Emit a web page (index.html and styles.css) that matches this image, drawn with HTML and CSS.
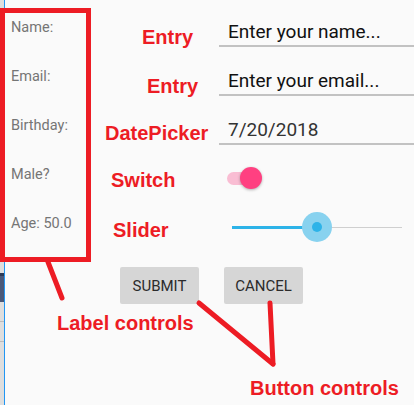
FILE: index.html
```html
<!DOCTYPE html>
<html lang="en">
<head>
  <meta charset="UTF-8">
  <title>Controls</title>
  <meta name="viewport" content="width=device-width, initial-scale=1.0">
  <link rel="stylesheet" href="styles.css">
</head>
<body>

<div class="page">
  <div class="edge">
    <div class="edge-tab"></div>
    <div class="edge-rule"></div>
    <div class="edge-rule"></div>
  </div>

  <main class="screen">
    <div class="form">
      <span class="field-label">Name:</span>
      <div class="entry">Enter your name...</div>

      <span class="field-label">Email:</span>
      <div class="entry">Enter your email...</div>

      <span class="field-label">Birthday:</span>
      <div class="entry entry-date">7/20/2018</div>

      <span class="field-label">Male?</span>
      <div class="control">
        <div class="switch">
          <span class="switch-track"></span>
          <span class="switch-thumb"></span>
        </div>
      </div>

      <span class="field-label">Age: 50.0</span>
      <div class="control">
        <div class="slider">
          <span class="slider-fill"></span>
          <span class="slider-thumb"><span class="slider-dot"></span></span>
          <span class="slider-rest"></span>
        </div>
      </div>
    </div>

    <div class="buttons">
      <button class="btn">Submit</button>
      <button class="btn">Cancel</button>
    </div>
  </main>

  <!-- annotations over the screenshot -->
  <div class="callout-box"></div>
  <svg class="callout-lines" width="414" height="405" viewBox="0 0 414 405">
    <line x1="48" y1="262" x2="62" y2="298" />
    <line x1="199" y1="303" x2="273" y2="364" />
    <line x1="270" y1="303" x2="273" y2="364" />
  </svg>
  <span class="note note-entry">Entry</span>
  <span class="note note-email">Entry</span>
  <span class="note note-date">DatePicker</span>
  <span class="note note-switch">Switch</span>
  <span class="note note-slider">Slider</span>
  <span class="note note-labels">Label controls</span>
  <span class="note note-buttons">Button controls</span>
</div>

</body>
</html>
```

FILE: styles.css
```css
:root {
  --bg: #fafafa;
  --note: #ed1c24;
  --pink: #ff4081;
  --blue: #2db3e8;
}

* {
  margin: 0;
  padding: 0;
  box-sizing: border-box;
}

body {
  font-family: Roboto, 'Noto Sans', sans-serif;
  background: var(--bg);
  color: #212121;
}

.page {
  position: relative;
  display: flex;
  width: 414px;
  height: 405px;
  overflow: hidden;
}

/* strip of the window behind */
.edge {
  width: 5px;
  background: #dedede;
  border-right: 1px solid #2196f3;
  padding-top: 273px;
}

.edge-tab {
  height: 29px;
  background: #4a5878;
  border-top: 3px solid #2c3a55;
}

.edge-rule {
  height: 1px;
  margin-top: 19px;
  background: #bcbcbc;
}

.screen {
  flex: 1;
}

/* form */
.form {
  display: grid;
  grid-template-columns: 214px 1fr;
  grid-auto-rows: 49px;
  padding-top: 3px;
}

.field-label {
  align-self: center;
  padding-left: 6px;
  font-size: 14.5px;
  color: #757575;
}

.entry {
  align-self: end;
  margin-bottom: 5px;
  padding: 0 0 2px 9px;
  font-size: 19px;
  line-height: 22px;
  color: #111;
  border-bottom: 2px solid #c2c2c2;
}

.entry-date {
  color: #333;
}

.control {
  display: flex;
  align-items: center;
  padding-top: 7px;
}

.switch {
  display: flex;
  align-items: center;
  margin-left: 8px;
}

.switch-track {
  width: 30px;
  height: 13px;
  border-radius: 7px;
  background: #f9bdd3;
}

.switch-thumb {
  width: 22px;
  height: 22px;
  margin-left: -17px;
  border-radius: 50%;
  background: var(--pink);
  box-shadow: 0 1px 3px rgba(0, 0, 0, 0.3);
}

.slider {
  display: flex;
  align-items: center;
  width: 170px;
  height: 30px;
  margin-left: 13px;
}

.slider-fill {
  width: 85px;
  height: 3px;
  background: var(--blue);
}

.slider-thumb {
  display: flex;
  justify-content: center;
  align-items: center;
  width: 30px;
  height: 30px;
  margin: 0 -15px;
  border-radius: 50%;
  background: #88d2ef;
  z-index: 1;
}

.slider-dot {
  width: 10px;
  height: 10px;
  border-radius: 50%;
  background: var(--blue);
}

.slider-rest {
  flex: 1;
  height: 1px;
  background: #cfcfcf;
}

.buttons {
  display: flex;
  gap: 25px;
  margin-top: 19px;
  padding-left: 115px;
}

.btn {
  width: 79px;
  height: 37px;
  border: none;
  border-radius: 2px;
  background: #d6d6d6;
  font-family: Roboto, sans-serif;
  font-size: 15px;
  text-transform: uppercase;
  color: #2b2b2b;
}

/* annotations */
.callout-box {
  position: absolute;
  left: 0;
  top: 8px;
  width: 91px;
  height: 254px;
  border: 5px solid var(--note);
}

.callout-lines {
  position: absolute;
  left: 0;
  top: 0;
  stroke: var(--note);
  stroke-width: 5;
  stroke-linecap: round;
}

.note {
  position: absolute;
  font-family: 'Liberation Sans', Arial, sans-serif;
  font-weight: bold;
  font-size: 20px;
  line-height: 20px;
  color: var(--note);
  white-space: nowrap;
}

.note-entry { left: 142px; top: 27px; }
.note-email { left: 147px; top: 76px; }
.note-date { left: 105px; top: 123px; }
.note-switch { left: 111px; top: 170px; }
.note-slider { left: 113px; top: 220px; }
.note-labels { left: 57px; top: 313px; }
.note-buttons { left: 250px; top: 378px; }
```
